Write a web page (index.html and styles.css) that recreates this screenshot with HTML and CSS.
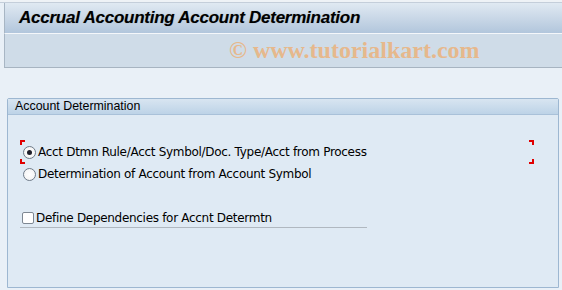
FILE: index.html
```
<!DOCTYPE html>
<html>
<head>
<meta charset="utf-8">
<link rel="stylesheet" href="styles.css">
</head>
<body>
<div class="screen">
  <div class="topline"></div>
  <div class="titlebar"><h1 class="title">Accrual Accounting Account Determination</h1></div>
  <div class="toolbar"><span class="watermark">© www.tutorialkart.com</span></div>
  <div class="content">
    <div class="group">
      <div class="group-head">Account Determination</div>
      <div class="group-body">
        <div class="radios">
          <span class="bracket tl"></span><span class="bracket bl"></span>
          <span class="bracket tr"></span><span class="bracket br"></span>
          <label class="row"><span class="radio on"></span><span class="lbl">Acct Dtmn Rule/Acct Symbol/Doc. Type/Acct from Process</span></label>
          <label class="row"><span class="radio"></span><span class="lbl">Determination of Account from Account Symbol</span></label>
        </div>
        <div class="checkrow">
          <span class="check"></span><span class="lbl">Define Dependencies for Accnt Determtn</span>
        </div>
      </div>
    </div>
  </div>
</div>
</body>
</html>
```
FILE: styles.css
```
* { box-sizing: border-box; }
html, body { margin: 0; padding: 0; }
body {
  width: 562px;
  height: 290px;
  overflow: hidden;
  background: #e9f0f7;
  font-family: Tahoma, "DejaVu Sans", sans-serif;
}
.screen { display: flex; flex-direction: column; height: 290px; }
.topline {
  height: 3px;
  background: #eef2f6;
  border-bottom: 1px solid #c4ceda;
}
.titlebar {
  margin-left: 4px;
  height: 31px;
  border-left: 1px solid #a8b6c4;
  background: linear-gradient(#e0e9f2, #b2c6dc);
  padding-left: 14px;
  display: flex;
  align-items: center;
  border-bottom: 1px solid #f4f7fa;
}
.title {
  margin: 0;
  font-family: "Liberation Sans", sans-serif;
  font-size: 17px;
  font-weight: bold;
  font-style: italic;
  color: #000;
  letter-spacing: -0.25px;
  text-shadow: 0 0 1px rgba(0,0,0,0.3);
}
.toolbar {
  margin-left: 4px;
  height: 34px;
  border-left: 1px solid #a8b6c4;
  background: #cfdce8;
  border-bottom: 1px solid #a7b4c1;
  padding-left: 224px;
  display: flex;
  align-items: center;
}
.watermark {
  font-family: "Liberation Serif", serif;
  font-weight: bold;
  font-size: 24px;
  color: #e6b88c;
}
.content {
  flex: 1;
  padding: 30px 3px 2px 7px;
  display: flex;
}
.group {
  flex: 1;
  border: 1px solid #9db7d1;
  border-radius: 2px 2px 0 0;
  background: #dfeaf4;
  display: flex;
  flex-direction: column;
}
.group-head {
  height: 16px;
  background: linear-gradient(#d8e5f1, #bdd3e7);
  border-bottom: 1px solid #a9c1d9;
  font-family: "Liberation Sans", sans-serif;
  font-size: 12.4px;
  color: #000;
  padding-left: 7px;
  line-height: 15px;
}
.group-body {
  padding: 25px 0 0 12px;
}
.radios {
  position: relative;
  width: 514px;
  padding-top: 1px;
  margin-left: 0;
}
.bracket {
  position: absolute;
  width: 5px;
  height: 5px;
  border-color: #e00000;
  border-style: solid;
  border-width: 0;
}
.bracket.tl { left: 0; top: 0; border-top-width: 2px; border-left-width: 2px; }
.bracket.bl { left: 0; top: 19px; border-bottom-width: 2px; border-left-width: 2px; }
.bracket.tr { right: 0; top: 0; border-top-width: 2px; border-right-width: 2px; }
.bracket.br { right: 0; top: 19px; border-bottom-width: 2px; border-right-width: 2px; }
.row {
  display: flex;
  align-items: center;
  height: 22px;
  padding-left: 3px;
}
.radio {
  width: 13px;
  height: 13px;
  border-radius: 50%;
  border: 1px solid #6f7b88;
  background: radial-gradient(#ffffff, #f0f0f0);
  margin-right: 2px;
  position: relative;
  flex: none;
}
.radio.on::after {
  content: "";
  position: absolute;
  left: 3px;
  top: 3px;
  width: 5px;
  height: 5px;
  border-radius: 50%;
  background: #1f1f2a;
}
.lbl {
  font-family: "DejaVu Sans", sans-serif;
  font-size: 12px;
  color: #000;
  letter-spacing: -0.3px;
}
.checkrow {
  margin-top: 24px;
  width: 347px;
  margin-left: 0;
  display: flex;
  align-items: center;
  height: 19px;
  padding-left: 2px;
  border-bottom: 1px solid #b0b8c0;
}
.check {
  width: 12px;
  height: 12px;
  border: 1px solid #7e8893;
  border-radius: 2px;
  background: #fff;
  margin-right: 2px;
  flex: none;
}
```
